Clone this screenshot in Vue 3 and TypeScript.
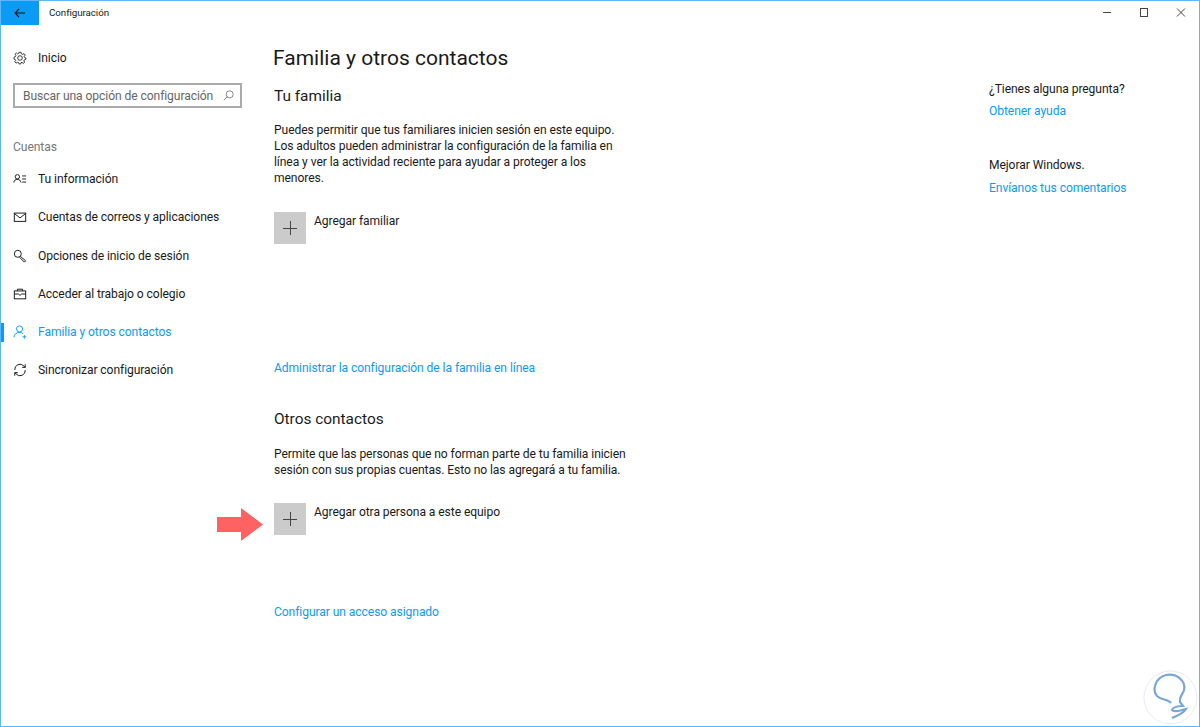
<script setup lang="ts">
const navItems: { label: string; icon: string; active?: boolean }[] = [
  { label: 'Tu información', icon: 'user' },
  { label: 'Cuentas de correos y aplicaciones', icon: 'mail' },
  { label: 'Opciones de inicio de sesión', icon: 'key' },
  { label: 'Acceder al trabajo o colegio', icon: 'case' },
  { label: 'Familia y otros contactos', icon: 'family', active: true },
  { label: 'Sincronizar configuración', icon: 'sync' },
]
</script>

<template>
  <div class="window">
    <header class="titlebar">
      <div class="back">
        <svg width="12" height="10" viewBox="0 0 12 10" fill="none" stroke="#111" stroke-width="1.1">
          <path d="M1 5H11M5 1L1 5L5 9" />
        </svg>
      </div>
      <span class="title">Configuración</span>
      <div class="controls">
        <svg width="10" height="10" viewBox="0 0 10 10" fill="none" stroke="#444"><path d="M1 4.500H9" /></svg>
        <svg width="10" height="10" viewBox="0 0 10 10" fill="none" stroke="#444"><rect x="1.500" y="0.500" width="7" height="8" /></svg>
        <svg width="10" height="10" viewBox="0 0 10 10" fill="none" stroke="#444"><path d="M1 0.500L9 8.500M9 0.500L1 8.500" /></svg>
      </div>
    </header>

    <div class="body">
      <aside class="sidebar">
        <div class="home">
          <svg class="icon" width="14" height="14" viewBox="0 0 16 16" fill="none" stroke="#333" stroke-width="1.100">
            <circle cx="8" cy="8" r="2.600" />
            <path d="M6.800 1.500H9.200L9.600 3.300L11 3.900L12.600 3L14 4.700L12.800 6L13.100 7.300L14.800 8V9.500L13 10L12.400 11.300L13.300 12.900L11.600 14.200L10.300 13L9 13.500L8.800 14.800H6.800L6.500 13.300L5.100 12.800L3.500 13.900L2 12.300L3.100 11L2.600 9.700L1.200 9.300V7L2.800 6.500L3.300 5.200L2.300 3.700L4 2.300L5.300 3.300L6.500 2.900Z" />
          </svg>
          <span>Inicio</span>
        </div>
        <div class="search">
          <span>Buscar una opción de configuración</span>
          <svg width="11" height="11" viewBox="0 0 14 14" fill="none" stroke="#777" stroke-width="1.100">
            <circle cx="8.500" cy="5.500" r="4.500" />
            <path d="M5.500 8.500L1 13" />
          </svg>
        </div>
        <div class="section">Cuentas</div>
        <nav class="nav">
          <div v-for="item in navItems" :key="item.label" class="nav-item" :class="{ active: item.active }">
            <svg class="icon" width="14" height="14" viewBox="0 0 16 16" fill="none" stroke="currentColor" stroke-width="1.100">
              <template v-if="item.icon === 'user'">
                <circle cx="5" cy="5.500" r="2.500" />
                <path d="M1 12C1 9.500 3 8.500 5 8.500S9 9.500 9 12M10.500 4.500H15M10.500 8H15M10.500 11.500H15" />
              </template>
              <template v-else-if="item.icon === 'mail'">
                <rect x="1.500" y="3.500" width="13" height="9.500" />
                <path d="M1.500 4L8 9L14.500 4" />
              </template>
              <template v-else-if="item.icon === 'key'">
                <circle cx="5.500" cy="5.500" r="4" />
                <path d="M8.500 8.500L14.500 13.500L13 15L7.500 9.500" />
              </template>
              <template v-else-if="item.icon === 'case'">
                <rect x="1.500" y="4.500" width="13" height="9" />
                <path d="M5 4.500V2.500H11V4.500M1.500 8H6L8 9.500L10 8H14.500" />
              </template>
              <template v-else-if="item.icon === 'family'">
                <circle cx="7.500" cy="4.500" r="3.500" />
                <path d="M1 14C1.500 10.500 4 8.500 7.500 8.500C9 8.500 10.500 9 11.500 10M11 13.500H15M13 11.500V15.500" />
              </template>
              <template v-else>
                <path d="M2 8A6 6 0 0 1 12.500 3.500L14 5M14 1.500V5H10.500M14 8A6 6 0 0 1 3.500 12.500L2 11M2 14.500V11H5.500" />
              </template>
            </svg>
            <span>{{ item.label }}</span>
          </div>
        </nav>
      </aside>

      <main class="content">
        <h1>Familia y otros contactos</h1>
        <section class="family">
          <h2>Tu familia</h2>
          <p>Puedes permitir que tus familiares inicien sesión en este equipo.<br />Los adultos pueden administrar la configuración de la familia en<br />línea y ver la actividad reciente para ayudar a proteger a los<br />menores.</p>
          <div class="add">
            <div class="plus"><svg width="14" height="14" viewBox="0 0 14 14" stroke="#444"><path d="M0 7.500H14M7.500 0V14" /></svg></div>
            <span>Agregar familiar</span>
          </div>
          <a class="link manage">Administrar la configuración de la familia en línea</a>
        </section>
        <section class="others">
          <h2>Otros contactos</h2>
          <p>Permite que las personas que no forman parte de tu familia inicien<br />sesión con sus propias cuentas. Esto no las agregará a tu familia.</p>
          <div class="add">
            <svg class="arrow" width="46" height="33" viewBox="0 0 46 33"><path d="M0 9H24V0L46 16.500L24 33V24H0Z" fill="#ff6262" /></svg>
            <div class="plus"><svg width="14" height="14" viewBox="0 0 14 14" stroke="#444"><path d="M0 7.500H14M7.500 0V14" /></svg></div>
            <span>Agregar otra persona a este equipo</span>
          </div>
          <a class="link kiosk">Configurar un acceso asignado</a>
        </section>
      </main>

      <aside class="help">
        <div>¿Tienes alguna pregunta?</div>
        <a class="link help-first">Obtener ayuda</a>
        <div class="improve">Mejorar Windows.</div>
        <a class="link help-second">Envíanos tus comentarios</a>
      </aside>
    </div>

    <svg class="logo" width="56" height="56" viewBox="0 0 56 56" fill="none">
      <circle cx="27.500" cy="27.500" r="26.500" stroke="#e6ebf5" />
      <path d="M28 33C25 29 18 30 14 26C9 20 12 8 23 5C34 3 43 11 41 20C40 24 36 27 37 32L40 36C36 36 30 37 29 40C31 43 38 40 43 39C40 44 33 46 29 48" stroke="#7ba6d8" stroke-width="2.200" />
    </svg>
  </div>
</template>

<style>
html, body { margin: 0; background: #fff; }
</style>

<style scoped>
.window {
  position: relative;
  width: 1200px;
  height: 727px;
  box-sizing: border-box;
  overflow: hidden;
  background: #fff;
  border: 1px solid #5bb8ff;
  font-family: "Roboto", sans-serif;
  font-size: 12.1px;
  letter-spacing: -0.08px;
  line-height: 16px;
  color: #1a1a1a;
  white-space: nowrap;
}
.titlebar { display: flex; align-items: center; height: 24px; }
.back {
  width: 38px;
  height: 24px;
  display: flex;
  align-items: center;
  justify-content: center;
  background: #0a9bf5;
}
.title { margin-left: 10px; font-size: 9.8px; }
.controls {
  margin-left: auto;
  margin-right: 13px;
  display: flex;
  gap: 27px;
}
.body { display: flex; height: 700px; }
.sidebar { width: 272px; flex: none; padding: 23px 0 0 0; box-sizing: border-box; }
.home { display: flex; align-items: center; gap: 11px; margin-left: 12px; height: 20px; }
.icon { flex: none; }
.search {
  display: flex;
  align-items: center;
  justify-content: space-between;
  box-sizing: border-box;
  width: 229px;
  height: 25px;
  margin: 15px 0 0 12px;
  padding: 0 6px 0 8px;
  border: 2px solid #aaa;
  color: #666;
}
.section { margin: 31px 0 0 12px; color: #777; }
.nav { margin-top: 5px; }
.nav-item {
  position: relative;
  display: flex;
  align-items: center;
  gap: 11px;
  height: 38.25px;
  padding-left: 12px;
}
.nav-item.active { color: #0a9bf5; }
.nav-item.active::before {
  content: "";
  position: absolute;
  left: 0;
  top: 10px;
  width: 3px;
  height: 19px;
  background: #0a9bf5;
}
.content { width: 716px; flex: none; padding-top: 19px; box-sizing: border-box; }
h1 { margin: 0; font-size: 21px; font-weight: 400; line-height: 28px; letter-spacing: 0; }
h2 { margin: 0; font-size: 15.4px; font-weight: 400; line-height: 20px; letter-spacing: 0; }
p { margin: 0; line-height: 16px; }
.family { padding: 14px 0 0 1px; }
.family p { margin-top: 16px; }
.add { position: relative; display: flex; align-items: flex-start; gap: 8px; margin-top: 26px; }
.add span { margin-top: 1px; line-height: 16px; }
.plus {
  width: 32px;
  height: 32px;
  display: flex;
  align-items: center;
  justify-content: center;
  background: #cbcbcb;
}
.arrow { position: absolute; left: -57px; top: 5px; }
.link { display: block; color: #0a9bf5; }
.manage { margin-top: 116px; }
.others { margin-top: 33px; padding-left: 1px; }
.others p { margin-top: 17px; }
.others .add { margin-top: 25px; }
.kiosk { margin-top: 69px; }
.help { padding-top: 56px; }
.help-first { margin-top: 6px; }
.help-second { margin-top: 7px; }
.improve { margin-top: 38px; }
.logo { position: absolute; right: 0; bottom: 0; }
</style>
